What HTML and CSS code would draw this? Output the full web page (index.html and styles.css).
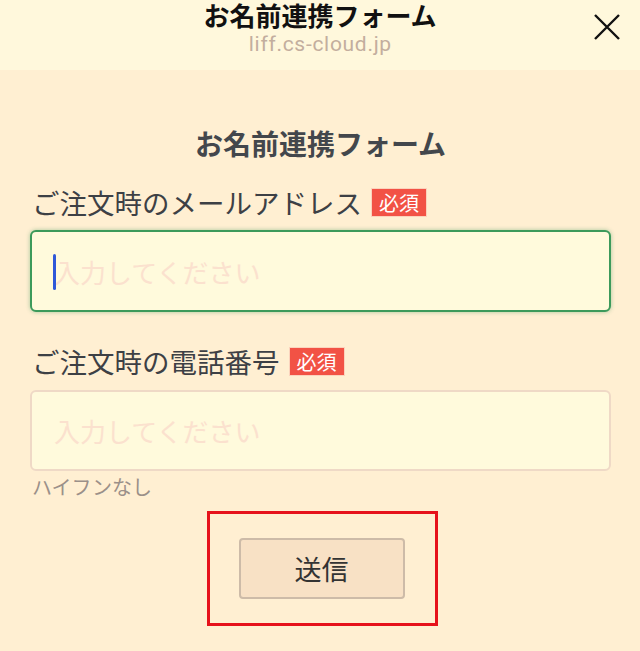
FILE: index.html
```html
<!doctype html>
<html lang="ja">
<head>
    <meta charset="UTF-8">
    <meta name="viewport" content="width=device-width, initial-scale=1.0">
    <title>お名前連携フォーム</title>
    <link rel="stylesheet" href="styles.css">
</head>
<body>
    <header class="bar">
        <div class="bar__title">お名前連携フォーム</div>
        <div class="bar__url">liff.cs-cloud.jp</div>
        <div class="bar__close">
            <svg width="26" height="26" viewBox="0 0 26 26">
                <path d="M1 1 L25 25 M25 1 L1 25" stroke="#111" stroke-width="2.4" fill="none"/>
            </svg>
        </div>
    </header>
    <main class="form">
        <h1 class="form__title">お名前連携フォーム</h1>
        <div class="field">
            <label class="field__label">ご注文時のメールアドレス<span class="badge">必須</span></label>
            <div class="field__box field__box--focus">
                <span class="caret"></span>
                <input type="text" placeholder="入力してください">
            </div>
        </div>
        <div class="field field--second">
            <label class="field__label">ご注文時の電話番号<span class="badge">必須</span></label>
            <div class="field__box">
                <input type="text" placeholder="入力してください">
            </div>
            <p class="field__hint">ハイフンなし</p>
        </div>
        <div class="submit">
            <div class="submit__frame">
                <button>送信</button>
            </div>
        </div>
    </main>
</body>
</html>
```

FILE: styles.css
```css
*, ::before, ::after {
    padding: 0;
    margin: 0;
    box-sizing: border-box;
    font-family: 'Noto Sans CJK JP', sans-serif;
}
body {
    background: #ffefd2;
    height: 651px;
    overflow: hidden;
}
.bar {
    position: relative;
    height: 70px;
    padding-top: 2px;
    background: #fff8dc;
    text-align: center;
}
.bar__title {
    font-size: 26px;
    font-weight: 700;
    line-height: 26px;
    color: #111111;
}
.bar__url {
    font-family: 'Roboto', sans-serif;
    font-size: 21px;
    letter-spacing: 0.7px;
    padding-left: 0.7px;
    line-height: 28px;
    color: #c3ae9e;
    margin-top: 2px;
}
.bar__close {
    position: absolute;
    top: 14px;
    right: 20px;
    width: 26px;
    height: 26px;
}
.form {
    padding: 55px 29px 0 30px;
}
.form__title {
    text-align: center;
    font-size: 28px;
    font-weight: 700;
    line-height: 36px;
    color: #43474c;
}
.field {
    margin-top: 23px;
}
.field--second {
    margin-top: 31px;
}
.field__label {
    display: flex;
    align-items: center;
    padding-left: 2px;
    font-size: 27.5px;
    line-height: 36px;
    color: #3d4045;
}
.badge {
    margin-left: 9px;
    background: #f25245;
    color: #ffffff;
    font-size: 20px;
    line-height: 27px;
    padding: 0 7px;
    border: 1px solid #fbd3bd;
}
.field__box {
    position: relative;
    margin-top: 10px;
    height: 82px;
    background: #fffadc;
    border: 2px solid #efd9c6;
    border-radius: 6px;
}
.field--second .field__box {
    margin-top: 11px;
    height: 81px;
}
.field__box--focus {
    border-color: #3c9a5b;
    box-shadow: 0 0 4px rgba(60, 154, 91, .45);
}
.field__box input {
    width: 100%;
    height: 100%;
    border: none;
    outline: none;
    background: none;
    padding: 0 20px 0 22px;
    font-size: 26px;
    color: #333333;
}
.field__box input::placeholder {
    color: #fbe1ce;
}
.caret {
    position: absolute;
    left: 21px;
    top: 22px;
    width: 3px;
    height: 36px;
    border-radius: 2px;
    background: #2f58d8;
}
.field__hint {
    margin-top: 4px;
    padding-left: 2px;
    font-size: 20px;
    line-height: 24px;
    color: #9b9089;
}
.submit {
    display: flex;
    justify-content: center;
    margin-top: 12px;
    padding-left: 3px;
}
.submit__frame {
    border: 3px solid #e6121b;
    padding: 24px 30px 24px 29px;
}
.submit__frame button {
    display: block;
    width: 166px;
    height: 61px;
    background: #f8e1c5;
    border: 2px solid #cdbba8;
    border-radius: 4px;
    font-size: 27px;
    color: #333333;
}
```
